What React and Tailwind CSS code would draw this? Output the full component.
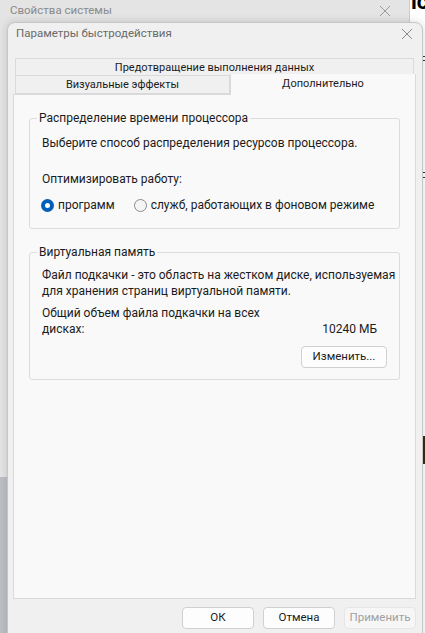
import React from "react";

const font = "font-['Roboto','Noto_Sans',sans-serif]";

const GroupBox = ({ title, className, children }) => (
  <div className={`relative border border-[#dcdcdc] rounded-[3px] ${className}`}>
    <span className="absolute left-[7px] top-[-10px] bg-[#f9f9f9] px-[2px] leading-[18px] whitespace-nowrap">
      {title}
    </span>
    {children}
  </div>
);

const Radio = ({ checked, label }) => (
  <label className="flex items-center gap-[4px] whitespace-nowrap">
    {checked ? (
      <span className="w-[13px] h-[13px] rounded-full bg-[#005fb8] flex items-center justify-center">
        <span className="w-[5px] h-[5px] rounded-full bg-white"></span>
      </span>
    ) : (
      <span className="w-[13px] h-[13px] rounded-full border border-[#8a8a8a] bg-[#f5f5f5]"></span>
    )}
    <span>{label}</span>
  </label>
);

const Button = ({ children, disabled, className = "" }) => (
  <button
    className={`h-[22px] rounded-[4px] border text-[11.5px] leading-none ${
      disabled
        ? "border-[#e6e6e6] bg-[#f6f6f6] text-[#a0a0a0]"
        : "border-[#d0d0d0] bg-[#fdfdfd] text-[#1b1b1b]"
    } ${className}`}
  >
    {children}
  </button>
);

export default function App() {
  return (
    <div className={`relative w-[425px] h-[633px] overflow-hidden bg-white text-[12px] text-[#1b1b1b] ${font}`}>
      {/* back window: Свойства системы */}
      <div className="absolute left-0 top-0 w-[410px] h-[477px] bg-[#e4e4e4] border-r border-[#cdcdcd] rounded-br-lg">
        <div className="flex items-center justify-between pl-[10px] pr-[18px] h-[21px]">
          <span className="text-[11.5px] text-[#8a8a8a]">Свойства системы</span>
          <svg width="12" height="12" viewBox="0 0 12 12" className="text-[#9a9a9a]">
            <path d="M1 1L11 11M11 1L1 11" stroke="currentColor" strokeWidth="1" />
          </svg>
        </div>
      </div>
      <div className="absolute left-0 top-[477px] w-[410px] h-[160px] bg-[#bcc0c4]"></div>

      {/* bits of the window behind on the right */}
      <div className="absolute left-[411px] top-[-9px] text-[22px] font-bold leading-none text-black">lc</div>
      <div className="absolute left-[423px] top-[56px] w-[3px] h-[1px] bg-[#333]"></div>
      <div className="absolute left-[423px] top-[60px] w-[3px] h-[1px] bg-[#333]"></div>
      <div className="absolute left-[423px] top-[172px] w-[3px] h-[1px] bg-[#333]"></div>
      <div className="absolute left-[423px] top-[177px] w-[3px] h-[1px] bg-[#333]"></div>
      <div className="absolute left-[423px] top-[436px] w-[3px] h-[28px] bg-[#3a2a1a]"></div>

      {/* front window: Параметры быстродействия */}
      <div className="absolute left-[7px] top-[22px] w-[416px] h-[630px] bg-[#f0f0f0] border border-[#c6c6c6] rounded-t-[8px] shadow-[0_0_8px_rgba(0,0,0,0.15)] flex flex-col">
        <div className="flex items-center justify-between pl-[8px] pr-[9px] pt-[1px] h-[21px]">
          <span className="text-[11.5px] text-[#6a6a6a]">Параметры быстродействия</span>
          <svg width="12" height="12" viewBox="0 0 12 12" className="text-[#8a8a8a]">
            <path d="M1 1L11 11M11 1L1 11" stroke="currentColor" strokeWidth="1" />
          </svg>
        </div>

        <div className="mt-[14px] ml-[5px] mr-[6px] flex flex-col">
          {/* tabs */}
          <div className="mx-[2px] h-[18px] pt-[3px] border border-[#dadada] bg-[#f0f0f0] flex items-center justify-center text-[11px]">
            Предотвращение выполнения данных
          </div>
          <div className="flex h-[18px] text-[11px]">
            <div className="ml-[2px] w-[215px] pt-[2px] border border-t-0 border-[#dadada] bg-[#f0f0f0] flex items-center justify-center">
              Визуальные эффекты
            </div>
            <div className="flex-1 -mt-[2px] h-[21px] bg-[#f9f9f9] border-x border-[#dadada] flex items-center justify-center relative z-10">
              Дополнительно
            </div>
          </div>

          {/* panel */}
          <div className="h-[505px] bg-[#f9f9f9] border border-[#dadada] px-[15px] pt-[23px]">
            <GroupBox title="Распределение времени процессора" className="h-[111px] pl-[12px] pt-[15px]">
              <div className="leading-[18px]">Выберите способ распределения ресурсов процессора.</div>
              <div className="mt-[18px] leading-[18px]">Оптимизировать работу:</div>
              <div className="mt-[8px] flex items-center gap-[19px] -ml-[1px] leading-[18px]">
                <Radio checked label="программ" />
                <Radio label="служб, работающих в фоновом режиме" />
              </div>
            </GroupBox>

            <GroupBox title="Виртуальная память" className="mt-[23px] h-[128px] pl-[12px] pr-[22px] pt-[14px]">
              <div className="leading-[16px] whitespace-nowrap">
                Файл подкачки - это область на жестком диске, используемая
                <br />
                для хранения страниц виртуальной памяти.
              </div>
              <div className="mt-[6px] flex items-end justify-between leading-[16px]">
                <div className="w-[235px]">Общий объем файла подкачки на всех дисках:</div>
                <div>10240 МБ</div>
              </div>
              <div className="mt-[9px] flex justify-end -mr-[10px]">
                <Button className="w-[86px]">Изменить...</Button>
              </div>
            </GroupBox>
          </div>
        </div>

        {/* bottom buttons */}
        <div className="mt-[8px] mr-[6px] flex justify-end gap-[9px]">
          <Button className="w-[72px]">ОК</Button>
          <Button className="w-[72px]">Отмена</Button>
          <Button disabled className="w-[72px]">Применить</Button>
        </div>
      </div>
    </div>
  );
}
